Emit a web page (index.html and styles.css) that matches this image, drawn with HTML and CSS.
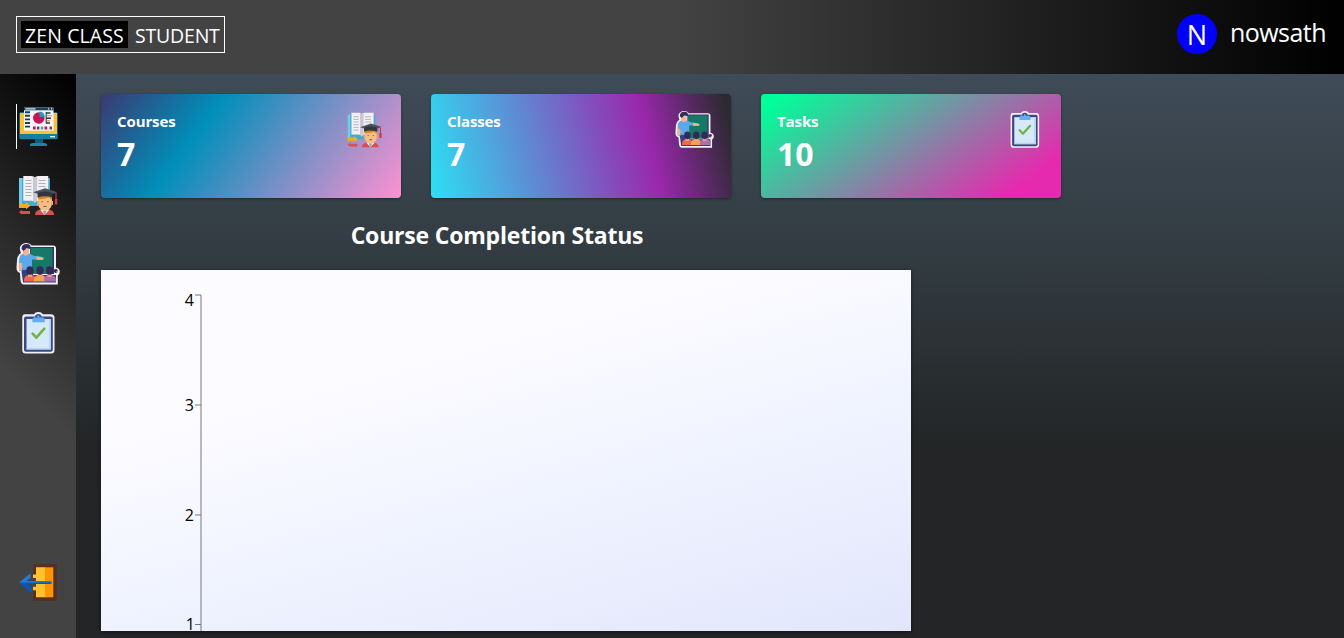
FILE: index.html
```html
<!DOCTYPE html>
<html lang="en">
<head>
<meta charset="utf-8">
<title>Zen Class Student</title>
<link rel="stylesheet" href="styles.css">
</head>
<body>
<svg class="sprite" aria-hidden="true">
  <symbol id="dashboard" viewBox="0 0 44 45">
    <rect x="3.3" y="8.3" width="38.4" height="27" rx="1.5" fill="#14809f"/>
    <rect x="4" y="9" width="37" height="21" fill="#fdbf35"/>
    <path d="M19 35h8v4h-8z" fill="#0b5d7d"/>
    <path d="M14 41q0-2 3-2h11q3 0 3 2v1H14z" fill="#1688a9"/>
    <path d="M34 32h5v1.4h-5z" fill="#d7eef5"/>
    <path d="M8 3.5h29.5v23.2H8z" fill="#fcf4f6"/>
    <path d="M8 3.5h29.5v2.8H8z" fill="#17405c"/>
    <path d="M9.5 4.2h10v1.2h-10zM32 4.2h1.3v1.2H32zM35 4.2h1.3v1.2H35z" fill="#d7eef5"/>
    <path d="M9 8.2h5M9 11.8h5M9 15.4h5M9 19h5M9 22.6h5" stroke="#17405c" stroke-width="1.9"/>
    <circle cx="22.8" cy="14" r="5.8" fill="#cc1256"/>
    <path d="M23.5 13V7.5a5.6 5.6 0 0 1 5.3 5z" fill="#1aa0c0"/>
    <path d="M30.2 8v11.5" stroke="#17405c" stroke-width="1.1"/>
    <path d="M30 9h4.5M30 14.2h5M30 19h4" stroke="#17405c" stroke-width="1.6"/>
    <path d="M31 11.6h5M31 16.7h3" stroke="#f1a52e" stroke-width="1.4"/>
    <path d="M17 22.5h2.7v3H17zM28.5 22.5h2.7v3h-2.7z" fill="#cc1256"/>
    <path d="M21 22.5h2.4v3H21zM33.5 22.5h2.5v3h-2.5z" fill="#624a61"/>
    <path d="M24.8 22.5h2.4v3h-2.4z" fill="#30a5bc"/>
  </symbol>
  <symbol id="courses" viewBox="0 0 44 45">
    <path d="M3 5h31v28H3z" fill="#45a9d1"/>
    <path d="M3 5h3v28H3z" fill="#78cbe7"/>
    <path d="M7.3 3h8q2.5 0 3.5 1.6Q20 3 22.3 3h10v24.7h-10q-2.5 0-3.5 2-1-2-3.5-2h-8z" fill="#f3f1f4"/>
    <path d="M17 3.5q1.4.3 1.8 1.4Q19.3 3.8 21 3.5V28q-1.5.2-2.2 1.7Q18.2 28.2 17 28z" fill="#c9c7d4"/>
    <path d="M9.5 7.5h6M9.5 10.5h6M9.5 13.5h6M9.5 16.5h6M9.5 19.5h6M9.5 22.5h6M22.5 7.5h7M22.5 10.5h7M22.5 13.5h7" stroke="#aaa7b2" stroke-width=".9"/>
    <path d="M19 42q0-4.3 5-5.400h9q5 1 5 5.400z" fill="#dd4e48"/>
    <path d="m24 36.500 4.700 5.500 4.800-5.500z" fill="#f7f3ef"/>
    <path d="M27 37.500h3.500L29.500 42h-1.600z" fill="#9aa4ae"/>
    <path d="M22 22h14v7q0 8.500-7 8.500T22 29z" fill="#f6be82"/>
    <path d="M22 22h14v5q-2-1.500-3-2.500-5 2-11 1.600z" fill="#d98628"/>
    <path d="M21 28h1.800v4H21zM35.200 28H37v4h-1.800z" fill="#efa967"/>
    <path d="M25.500 28.700h1.200M31.300 28.700h1.200M27.500 33.500h3" stroke="#8b5134" stroke-width="1.200"/>
    <path d="m17 19.300 12.200-4.100 12.300 4-12.300 4z" fill="#4b525d"/>
    <path d="M21.500 20q7.500-3 15 0v4.500q-7.500-2.700-15 0z" fill="#31363f"/>
    <path d="M40 20v7" stroke="#c43b43" stroke-width="1.200"/><path d="M38.800 26h2.500v5.500h-2.500z" fill="#c53c42"/>
    <path d="M3 31h7v-1.700l4.500 3.500-4.500 3.500V35H3z" fill="#edac27"/>
    <path d="M14 38h-8v-1.200L3 39.200l3 2.300V41h8z" fill="#d75050"/>
  </symbol>
  <symbol id="classes" viewBox="0 0 44 45">
    <path d="M4 5q2-4 6-4 4 0 5.500 2.500H37q3 0 3 3v19q3.800 1 3.800 4t-2 4v9H8q-3 0-3.500-4L4 31Q.500 30 .500 26L1 18q.500-5 4-7Q3.500 8 4 5z" fill="#f5f1fa"/>
    <path d="M14 5h24v27H14z" fill="#343465"/>
    <path d="M14.500 6h22v26h-22z" fill="#187868"/>
    <path d="M5 26h11l1 7h23v7.500H7z" fill="#34407d"/>
    <path d="M5.500 12.500q4-2.500 9-.500l3 1.800 8 1v3l-9.500-.300V28h-9v-7q0 5-.700 8H3V19q0-5 2.500-6.500z" fill="#5ba9e9"/>
    <path d="M3 21h3v7.500H3zM20.500 14.400l7 1v2.400l-7 .100z" fill="#f6af8a"/>
    <path d="M7 7h6v4.500q-1 2.300-3 2.300t-3-2.300z" fill="#f7b28d"/>
    <path d="M5.500 7q0-5 5-5T14.500 7l-4-.800L7.500 9z" fill="#352c5b"/>
    <path d="M8 39.500V38q0-5 6-5t5.500 5v1.500z" fill="#ed6752"/>
    <path d="M18 39.500V38q0-5 6-5t5.500 5v1.500z" fill="#f3a34c"/>
    <path d="M28 39.500V38q0-5 6-5t6 5v1.500z" fill="#ae6daf"/>
    <path d="M12 31h4v4h-4zM22 31h4v4h-4zM31.500 31h4v4h-4z" fill="#efa080"/>
    <g fill="#322a59"><ellipse cx="14" cy="28.500" rx="3.700" ry="4.300"/><ellipse cx="24" cy="28.500" rx="3.700" ry="4.300"/><ellipse cx="33.500" cy="28.500" rx="3.700" ry="4.300"/><circle cx="39.800" cy="29" r="2"/></g>
    <circle cx="41" cy="29.800" r=".900" fill="#ef9b6f"/>
  </symbol>
  <symbol id="tasks" viewBox="0 0 44 45">
    <path d="M9 3.200h9Q19 1 22.300 1T27 3.200h8q3.500 0 3.500 3.500V39q0 3.500-3.500 3.500H9.700q-3.400 0-3.400-3.500V6.200q0-3 2.700-3z" fill="#f2f1fb"/>
    <rect x="8" y="5.400" width="28.800" height="35.300" rx="2" fill="#3f4683"/>
    <path d="M10.500 8h24.300v30.500H10.500z" fill="#d5e9fb"/>
    <path d="M33 8h1.800v30.500H10.500V37H33z" fill="#b7d4f4"/>
    <path d="M16.300 11.300V8q0-1 2-1.500.500-3.500 4-3.500t4 3.500q2.500.300 2.500 1.500v3.300z" fill="#65adf1"/>
    <path d="M19 6.500q.500-3.500 3.300-3.500t3.500 3.500z" fill="#454887"/><circle cx="22.300" cy="5.600" r="1" fill="#8abcf2"/>
    <path d="m16.600 22.700 3.700 4 8-9" fill="none" stroke="#70b544" stroke-width="2.600" stroke-linecap="round" stroke-linejoin="round"/>
  </symbol>
  <symbol id="logout" viewBox="0 0 44 45">
    <path d="M17.300 4h23.400v36.700H17.300v-10H20V15h-2.700z" fill="#56301e"/>
    <path d="M20 7.300h9.500v30H20v-7h-3v-3.500h3V18h-3v-3.500h3z" fill="#ffc12e"/>
    <path d="M29 7.300h8.300v30H29z" fill="#ff9300"/>
    <path d="m3 22.500 11.500-9.300V18l-4 3h24q1.500 0 1.500 1.500T34.500 24h-24z" fill="#247bd3"/>
    <path d="M3 22.500h32q0 1.500-1 1.500H12l4 4v3.700h-2.500z" fill="#0856b5"/>
  </symbol>
</svg>

<header class="topbar">
  <div class="brand"><span class="brand-name">ZEN CLASS</span><span class="brand-role">STUDENT</span></div>
  <div class="user"><span class="avatar">N</span><span class="user-name">nowsath</span></div>
</header>

<div class="layout">
  <nav class="sidebar">
    <a class="nav-link active"><svg><use href="#dashboard"/></svg></a>
    <a class="nav-link"><svg><use href="#courses"/></svg></a>
    <a class="nav-link"><svg><use href="#classes"/></svg></a>
    <a class="nav-link"><svg><use href="#tasks"/></svg></a>
    <a class="nav-link leave"><svg><use href="#logout"/></svg></a>
  </nav>
  <main class="content">
    <section class="cards">
      <article class="card card-courses">
        <div><h2 class="card-title">Courses</h2><p class="card-value">7</p></div>
        <svg class="card-icon"><use href="#courses"/></svg>
      </article>
      <article class="card card-classes">
        <div><h2 class="card-title">Classes</h2><p class="card-value">7</p></div>
        <svg class="card-icon"><use href="#classes"/></svg>
      </article>
      <article class="card card-tasks">
        <div><h2 class="card-title">Tasks</h2><p class="card-value">10</p></div>
        <svg class="card-icon"><use href="#tasks"/></svg>
      </article>
    </section>
    <h1 class="chart-title"><span>Course Completion Status</span></h1>
    <section class="chart">
      <svg class="plot" width="810" height="361">
        <path class="axis" d="M100 25V361M94 25h6M94 135h6M94 245h6M94 354.500h6"/>
        <g class="tick"><text x="93" y="36">4</text><text x="93" y="140.500">3</text><text x="93" y="250.500">2</text><text x="94" y="360">1</text></g>
      </svg>
    </section>
  </main>
</div>
</body>
</html>
```

FILE: styles.css
```css
* { box-sizing: border-box; }

body {
  margin: 0;
  height: 638px;
  overflow: hidden;
  display: flex;
  flex-direction: column;
  font-family: "Segoe UI", "Open Sans", "Noto Sans", sans-serif;
  color: #fff;
}

.sprite { display: none; }

.topbar {
  flex: none;
  height: 74px;
  padding: 14px 18px 0 16px;
  display: flex;
  justify-content: space-between;
  align-items: flex-start;
  background: linear-gradient(to right, #434343 50%, #000);
}

.brand {
  width: 209px;
  height: 37px;
  margin-top: 2px;
  padding: 4px;
  display: flex;
  gap: 7px;
  border: 1px solid #fff;
  font-size: 19.5px;
  line-height: 30px;
  white-space: nowrap;
}

.brand-name {
  width: 107px;
  height: 27px;
  padding-left: 4px;
  background: #000;
  letter-spacing: 0.1px;
}

.brand-role { letter-spacing: -0.2px; }

.user { display: flex; gap: 13px; }

.avatar {
  width: 40px;
  height: 40px;
  border-radius: 50%;
  background: #00f;
  font-size: 27px;
  line-height: 42px;
  text-align: center;
}

.user-name {
  width: 96px;
  font-size: 25px;
  line-height: 37px;
  letter-spacing: -0.55px;
  white-space: nowrap;
}

.layout { flex: 1; min-height: 0; display: flex; }

.sidebar {
  width: 76px;
  padding: 30px 16px 33px;
  display: flex;
  flex-direction: column;
  gap: 24px;
  background: linear-gradient(225deg, #000, #434343 57%);
}

.nav-link { height: 45px; display: flex; }
.nav-link svg { width: 44px; height: 45px; flex: none; }
.nav-link.active { box-shadow: inset 1px 0 #fff; }
.leave { margin-top: auto; }

.content {
  flex: 1;
  padding: 20px 25px 7px;
  display: flex;
  flex-direction: column;
  background: linear-gradient(180deg, #3f4b57, #313a3f 35%, #232526 66%);
}

.cards { display: flex; gap: 30px; }

.card {
  width: 300px;
  height: 104px;
  padding: 16px 17px 0 16px;
  display: flex;
  justify-content: space-between;
  border-radius: 4px;
  box-shadow: 0 1px 3px rgba(0, 0, 0, 0.4);
}

.card-courses { background: linear-gradient(126deg, #3b3a72, #008fba 33%, #fe91d2); }
.card-classes { background: linear-gradient(76deg, #2be0f4, #9a28ad 71%, #2a2a2f 98%); }
.card-tasks { background: linear-gradient(145deg, #00ff99 5%, #e62aae 87%); }

.card-title {
  margin: 0;
  font-size: 15px;
  line-height: 22px;
  letter-spacing: -0.1px;
}

.card-value {
  margin: 0;
  font-size: 32px;
  line-height: 43px;
  font-weight: 700;
}

.card-icon { width: 39px; height: 40px; }

.chart-title {
  margin: 17px 0 15px;
  width: 792px;
  font-size: 23px;
  line-height: 40px;
  text-align: center;
  letter-spacing: -0.2px;
}

.chart {
  width: 810px;
  height: 361px;
  background: linear-gradient(165deg, #fcfbff 30%, #f2f5ff 55%, #e1e6fb);
  box-shadow: 0 1px 4px rgba(0, 0, 0, 0.5);
}

.plot { display: block; }
.axis { fill: none; stroke: #777780; stroke-width: 1; }
.tick { fill: #000; font-size: 16px; font-weight: 500; text-anchor: end; }
```
